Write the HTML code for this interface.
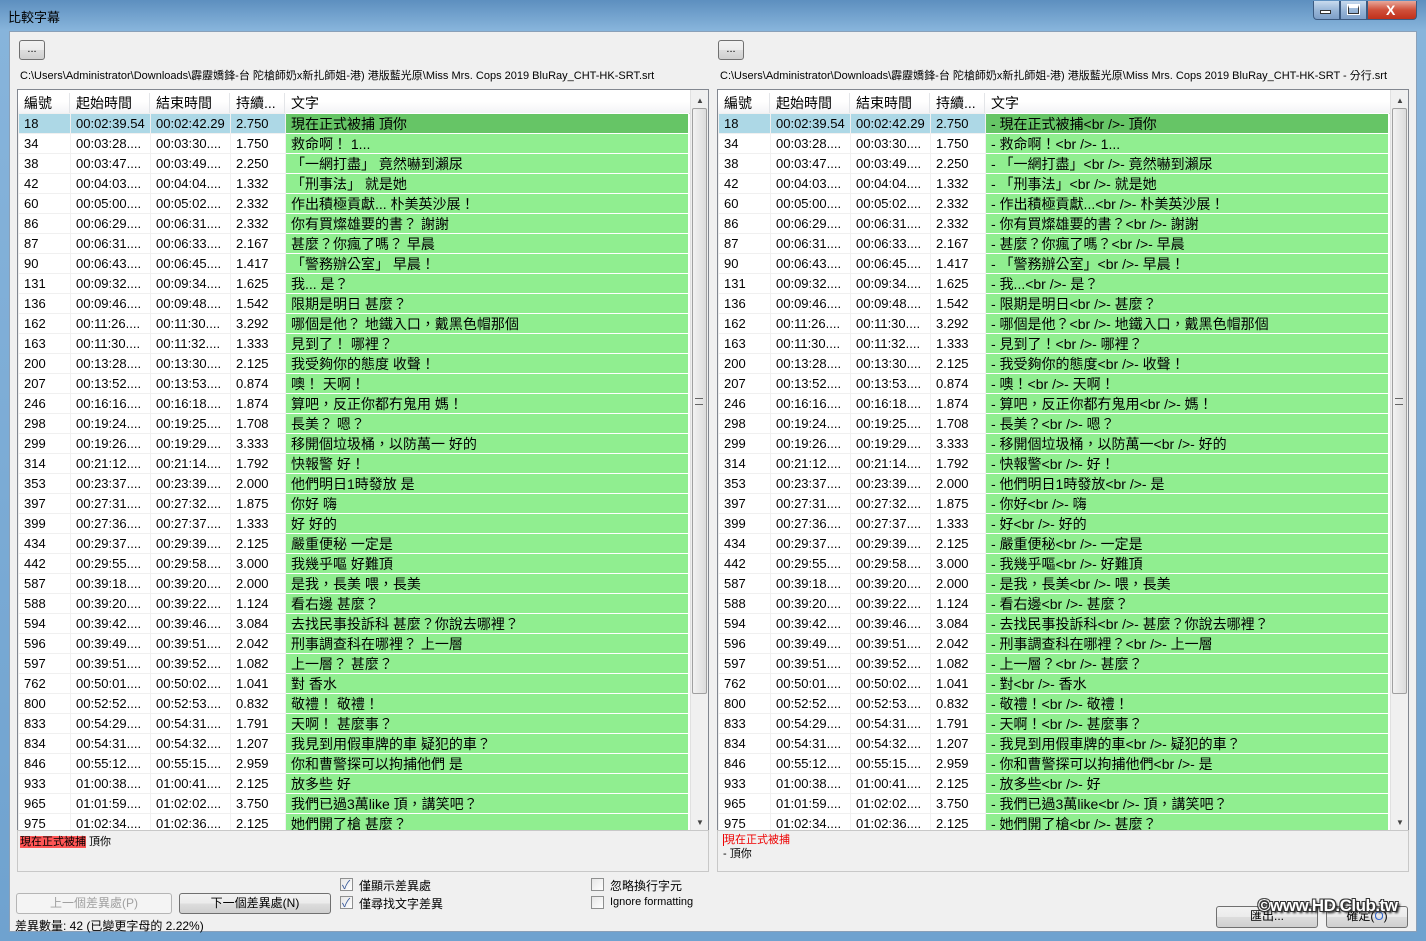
<!DOCTYPE html>
<html><head><meta charset="utf-8"><style>
*{margin:0;padding:0;box-sizing:border-box}
body{width:1426px;height:941px;overflow:hidden;position:relative;background:linear-gradient(#5d8fbf,#87b4db 30px,#6fa2cf);font-family:"Liberation Sans","Noto Sans CJK TC",sans-serif;font-size:12px;color:#000}
.abs{position:absolute}
#client{left:9px;top:31px;width:1408px;height:901px;background:#f0f0f0;border:1px solid #8aa0b8}
.title{left:8px;top:7px;font-size:13px;color:#000}
.wbtn{top:1px;height:19px;border:1px solid #3b5a80;border-top:none;background:linear-gradient(#c9dbee,#9ab7d8 50%,#7d9fc8);}
.dots{width:26px;height:20px;border:1px solid #707070;border-radius:3px;background:linear-gradient(#f2f2f2,#ebebeb 50%,#dddddd 51%,#cfcfcf);font-size:11px;text-align:center;line-height:16px}
.path{font-size:11px;white-space:nowrap}
.list{width:692px;height:742px;background:#fff;border:1px solid #828790;overflow:hidden}
.hdr{position:absolute;left:0;top:0;width:672px;height:24px;background:linear-gradient(#fff,#fff 50%,#f3f4f6);border-bottom:1px solid #d5d5d5}
.hdr span{position:absolute;top:3px;font-size:14px;border-right:1px solid #e3e5e8;height:21px;padding-left:6px}
table{position:absolute;left:0;top:23px;border-collapse:collapse;table-layout:fixed;width:670px}
td{height:20px;border:1px solid #f0f0f0;white-space:nowrap;overflow:hidden;font-size:13px;padding-left:5px;line-height:18px}
td:nth-child(5){background:#90ee90;font-size:14px;border-color:#fff}
tr.sel td{background:#add8e6}
tr.sel td:nth-child(5){background:#66c566}
.sb{position:absolute;right:0;top:0;width:18px;height:740px;background:#f0f0f0;border-left:1px solid #e0e0e0}
.thumb{position:absolute;left:1px;top:18px;width:15px;height:586px;border:1px solid #a0a0a0;border-radius:2px;background:linear-gradient(90deg,#f2f2f2,#dcdcdc)}
.diff{width:692px;height:42px;border:1px solid #c8c8c8;background:#f0f0f0;font-size:11px}
.btn{height:21px;border:1px solid #707070;border-radius:3px;background:linear-gradient(#f2f2f2,#ebebeb 50%,#dddddd 51%,#cfcfcf);text-align:center;line-height:19px;font-size:12px}
.cb{width:13px;height:13px;border:1px solid #8e8f8f;background:linear-gradient(135deg,#e6e6e6,#fff)}
.lbl{font-size:12px;white-space:nowrap}
</style></head><body>
<div class="abs title">比較字幕</div>
<div class="abs wbtn" style="left:1313px;width:27px;border-left:1px solid #3b5a80;border-radius:0 0 0 4px"></div>
<div class="abs wbtn" style="left:1340px;width:27px"></div>
<div class="abs wbtn" style="left:1367px;width:50px;background:linear-gradient(#e8a89a,#d0503a 50%,#c0301b);border-radius:0 0 4px 0"></div>
<div class="abs" style="left:1320px;top:10px;width:11px;height:4px;background:#fff;border:1px solid #333"></div>
<div class="abs" style="left:1348px;top:5px;width:11px;height:9px;border:1px solid #333;border-top:3px solid #fff;outline:1px solid #fff"></div>
<div class="abs" style="left:1386px;top:2px;color:#fff;font-weight:bold;font-size:14px">X</div>
<div class="abs" id="client"></div>

<div class="abs dots" style="left:19px;top:40px">...</div>
<div class="abs dots" style="left:718px;top:40px">...</div>
<div class="abs path" style="left:20px;top:67px">C:\Users\Administrator\Downloads\霹靂嬌鋒-台 陀槍師奶x新扎師姐-港) 港版藍光原\Miss Mrs. Cops 2019 BluRay_CHT-HK-SRT.srt</div>
<div class="abs path" style="left:720px;top:67px">C:\Users\Administrator\Downloads\霹靂嬌鋒-台 陀槍師奶x新扎師姐-港) 港版藍光原\Miss Mrs. Cops 2019 BluRay_CHT-HK-SRT - 分行.srt</div>

<div class="abs list" style="left:17px;top:89px">
<div class="hdr"><span style="left:0;width:52px">編號</span><span style="left:52px;width:80px">起始時間</span><span style="left:132px;width:80px">結束時間</span><span style="left:212px;width:55px">持續...</span><span style="left:267px;width:405px;border:none">文字</span></div>
<table><colgroup><col style="width:52px"><col style="width:80px"><col style="width:80px"><col style="width:55px"><col style="width:403px"></colgroup>
<tr class="sel"><td>18</td><td>00:02:39.54</td><td>00:02:42.29</td><td>2.750</td><td>現在正式被捕 頂你</td></tr>
<tr><td>34</td><td>00:03:28....</td><td>00:03:30....</td><td>1.750</td><td>救命啊！ 1...</td></tr>
<tr><td>38</td><td>00:03:47....</td><td>00:03:49....</td><td>2.250</td><td>「一網打盡」 竟然嚇到瀨尿</td></tr>
<tr><td>42</td><td>00:04:03....</td><td>00:04:04....</td><td>1.332</td><td>「刑事法」 就是她</td></tr>
<tr><td>60</td><td>00:05:00....</td><td>00:05:02....</td><td>2.332</td><td>作出積極貢獻... 朴美英沙展！</td></tr>
<tr><td>86</td><td>00:06:29....</td><td>00:06:31....</td><td>2.332</td><td>你有買燦雄要的書？ 謝謝</td></tr>
<tr><td>87</td><td>00:06:31....</td><td>00:06:33....</td><td>2.167</td><td>甚麼？你瘋了嗎？ 早晨</td></tr>
<tr><td>90</td><td>00:06:43....</td><td>00:06:45....</td><td>1.417</td><td>「警務辦公室」 早晨！</td></tr>
<tr><td>131</td><td>00:09:32....</td><td>00:09:34....</td><td>1.625</td><td>我... 是？</td></tr>
<tr><td>136</td><td>00:09:46....</td><td>00:09:48....</td><td>1.542</td><td>限期是明日 甚麼？</td></tr>
<tr><td>162</td><td>00:11:26....</td><td>00:11:30....</td><td>3.292</td><td>哪個是他？ 地鐵入口，戴黑色帽那個</td></tr>
<tr><td>163</td><td>00:11:30....</td><td>00:11:32....</td><td>1.333</td><td>見到了！ 哪裡？</td></tr>
<tr><td>200</td><td>00:13:28....</td><td>00:13:30....</td><td>2.125</td><td>我受夠你的態度 收聲！</td></tr>
<tr><td>207</td><td>00:13:52....</td><td>00:13:53....</td><td>0.874</td><td>噢！ 天啊！</td></tr>
<tr><td>246</td><td>00:16:16....</td><td>00:16:18....</td><td>1.874</td><td>算吧，反正你都冇鬼用 媽！</td></tr>
<tr><td>298</td><td>00:19:24....</td><td>00:19:25....</td><td>1.708</td><td>長美？ 嗯？</td></tr>
<tr><td>299</td><td>00:19:26....</td><td>00:19:29....</td><td>3.333</td><td>移開個垃圾桶，以防萬一 好的</td></tr>
<tr><td>314</td><td>00:21:12....</td><td>00:21:14....</td><td>1.792</td><td>快報警 好！</td></tr>
<tr><td>353</td><td>00:23:37....</td><td>00:23:39....</td><td>2.000</td><td>他們明日1時發放 是</td></tr>
<tr><td>397</td><td>00:27:31....</td><td>00:27:32....</td><td>1.875</td><td>你好 嗨</td></tr>
<tr><td>399</td><td>00:27:36....</td><td>00:27:37....</td><td>1.333</td><td>好 好的</td></tr>
<tr><td>434</td><td>00:29:37....</td><td>00:29:39....</td><td>2.125</td><td>嚴重便秘 一定是</td></tr>
<tr><td>442</td><td>00:29:55....</td><td>00:29:58....</td><td>3.000</td><td>我幾乎嘔 好難頂</td></tr>
<tr><td>587</td><td>00:39:18....</td><td>00:39:20....</td><td>2.000</td><td>是我，長美 喂，長美</td></tr>
<tr><td>588</td><td>00:39:20....</td><td>00:39:22....</td><td>1.124</td><td>看右邊 甚麼？</td></tr>
<tr><td>594</td><td>00:39:42....</td><td>00:39:46....</td><td>3.084</td><td>去找民事投訴科 甚麼？你說去哪裡？</td></tr>
<tr><td>596</td><td>00:39:49....</td><td>00:39:51....</td><td>2.042</td><td>刑事調查科在哪裡？ 上一層</td></tr>
<tr><td>597</td><td>00:39:51....</td><td>00:39:52....</td><td>1.082</td><td>上一層？ 甚麼？</td></tr>
<tr><td>762</td><td>00:50:01....</td><td>00:50:02....</td><td>1.041</td><td>對 香水</td></tr>
<tr><td>800</td><td>00:52:52....</td><td>00:52:53....</td><td>0.832</td><td>敬禮！ 敬禮！</td></tr>
<tr><td>833</td><td>00:54:29....</td><td>00:54:31....</td><td>1.791</td><td>天啊！ 甚麼事？</td></tr>
<tr><td>834</td><td>00:54:31....</td><td>00:54:32....</td><td>1.207</td><td>我見到用假車牌的車 疑犯的車？</td></tr>
<tr><td>846</td><td>00:55:12....</td><td>00:55:15....</td><td>2.959</td><td>你和曹警探可以拘捕他們 是</td></tr>
<tr><td>933</td><td>01:00:38....</td><td>01:00:41....</td><td>2.125</td><td>放多些 好</td></tr>
<tr><td>965</td><td>01:01:59....</td><td>01:02:02....</td><td>3.750</td><td>我們已過3萬like 頂，講笑吧？</td></tr>
<tr><td>975</td><td>01:02:34....</td><td>01:02:36....</td><td>2.125</td><td>她們開了槍 甚麼？</td></tr>
</table>
<div class="sb"><div class="abs" style="left:5px;top:6px;font-size:8px;color:#444">▲</div><div class="thumb"></div><div class="abs" style="left:4px;top:308px;width:8px;height:7px;border-top:1px solid #666;border-bottom:1px solid #666"></div><div class="abs" style="left:5px;top:728px;font-size:8px;color:#444">▼</div></div>
</div>

<div class="abs list" style="left:717px;top:89px">
<div class="hdr"><span style="left:0;width:52px">編號</span><span style="left:52px;width:80px">起始時間</span><span style="left:132px;width:80px">結束時間</span><span style="left:212px;width:55px">持續...</span><span style="left:267px;width:405px;border:none">文字</span></div>
<table><colgroup><col style="width:52px"><col style="width:80px"><col style="width:80px"><col style="width:55px"><col style="width:403px"></colgroup>
<tr class="sel"><td>18</td><td>00:02:39.54</td><td>00:02:42.29</td><td>2.750</td><td>- 現在正式被捕&lt;br /&gt;- 頂你</td></tr>
<tr><td>34</td><td>00:03:28....</td><td>00:03:30....</td><td>1.750</td><td>- 救命啊！&lt;br /&gt;- 1...</td></tr>
<tr><td>38</td><td>00:03:47....</td><td>00:03:49....</td><td>2.250</td><td>- 「一網打盡」&lt;br /&gt;- 竟然嚇到瀨尿</td></tr>
<tr><td>42</td><td>00:04:03....</td><td>00:04:04....</td><td>1.332</td><td>- 「刑事法」&lt;br /&gt;- 就是她</td></tr>
<tr><td>60</td><td>00:05:00....</td><td>00:05:02....</td><td>2.332</td><td>- 作出積極貢獻...&lt;br /&gt;- 朴美英沙展！</td></tr>
<tr><td>86</td><td>00:06:29....</td><td>00:06:31....</td><td>2.332</td><td>- 你有買燦雄要的書？&lt;br /&gt;- 謝謝</td></tr>
<tr><td>87</td><td>00:06:31....</td><td>00:06:33....</td><td>2.167</td><td>- 甚麼？你瘋了嗎？&lt;br /&gt;- 早晨</td></tr>
<tr><td>90</td><td>00:06:43....</td><td>00:06:45....</td><td>1.417</td><td>- 「警務辦公室」&lt;br /&gt;- 早晨！</td></tr>
<tr><td>131</td><td>00:09:32....</td><td>00:09:34....</td><td>1.625</td><td>- 我...&lt;br /&gt;- 是？</td></tr>
<tr><td>136</td><td>00:09:46....</td><td>00:09:48....</td><td>1.542</td><td>- 限期是明日&lt;br /&gt;- 甚麼？</td></tr>
<tr><td>162</td><td>00:11:26....</td><td>00:11:30....</td><td>3.292</td><td>- 哪個是他？&lt;br /&gt;- 地鐵入口，戴黑色帽那個</td></tr>
<tr><td>163</td><td>00:11:30....</td><td>00:11:32....</td><td>1.333</td><td>- 見到了！&lt;br /&gt;- 哪裡？</td></tr>
<tr><td>200</td><td>00:13:28....</td><td>00:13:30....</td><td>2.125</td><td>- 我受夠你的態度&lt;br /&gt;- 收聲！</td></tr>
<tr><td>207</td><td>00:13:52....</td><td>00:13:53....</td><td>0.874</td><td>- 噢！&lt;br /&gt;- 天啊！</td></tr>
<tr><td>246</td><td>00:16:16....</td><td>00:16:18....</td><td>1.874</td><td>- 算吧，反正你都冇鬼用&lt;br /&gt;- 媽！</td></tr>
<tr><td>298</td><td>00:19:24....</td><td>00:19:25....</td><td>1.708</td><td>- 長美？&lt;br /&gt;- 嗯？</td></tr>
<tr><td>299</td><td>00:19:26....</td><td>00:19:29....</td><td>3.333</td><td>- 移開個垃圾桶，以防萬一&lt;br /&gt;- 好的</td></tr>
<tr><td>314</td><td>00:21:12....</td><td>00:21:14....</td><td>1.792</td><td>- 快報警&lt;br /&gt;- 好！</td></tr>
<tr><td>353</td><td>00:23:37....</td><td>00:23:39....</td><td>2.000</td><td>- 他們明日1時發放&lt;br /&gt;- 是</td></tr>
<tr><td>397</td><td>00:27:31....</td><td>00:27:32....</td><td>1.875</td><td>- 你好&lt;br /&gt;- 嗨</td></tr>
<tr><td>399</td><td>00:27:36....</td><td>00:27:37....</td><td>1.333</td><td>- 好&lt;br /&gt;- 好的</td></tr>
<tr><td>434</td><td>00:29:37....</td><td>00:29:39....</td><td>2.125</td><td>- 嚴重便秘&lt;br /&gt;- 一定是</td></tr>
<tr><td>442</td><td>00:29:55....</td><td>00:29:58....</td><td>3.000</td><td>- 我幾乎嘔&lt;br /&gt;- 好難頂</td></tr>
<tr><td>587</td><td>00:39:18....</td><td>00:39:20....</td><td>2.000</td><td>- 是我，長美&lt;br /&gt;- 喂，長美</td></tr>
<tr><td>588</td><td>00:39:20....</td><td>00:39:22....</td><td>1.124</td><td>- 看右邊&lt;br /&gt;- 甚麼？</td></tr>
<tr><td>594</td><td>00:39:42....</td><td>00:39:46....</td><td>3.084</td><td>- 去找民事投訴科&lt;br /&gt;- 甚麼？你說去哪裡？</td></tr>
<tr><td>596</td><td>00:39:49....</td><td>00:39:51....</td><td>2.042</td><td>- 刑事調查科在哪裡？&lt;br /&gt;- 上一層</td></tr>
<tr><td>597</td><td>00:39:51....</td><td>00:39:52....</td><td>1.082</td><td>- 上一層？&lt;br /&gt;- 甚麼？</td></tr>
<tr><td>762</td><td>00:50:01....</td><td>00:50:02....</td><td>1.041</td><td>- 對&lt;br /&gt;- 香水</td></tr>
<tr><td>800</td><td>00:52:52....</td><td>00:52:53....</td><td>0.832</td><td>- 敬禮！&lt;br /&gt;- 敬禮！</td></tr>
<tr><td>833</td><td>00:54:29....</td><td>00:54:31....</td><td>1.791</td><td>- 天啊！&lt;br /&gt;- 甚麼事？</td></tr>
<tr><td>834</td><td>00:54:31....</td><td>00:54:32....</td><td>1.207</td><td>- 我見到用假車牌的車&lt;br /&gt;- 疑犯的車？</td></tr>
<tr><td>846</td><td>00:55:12....</td><td>00:55:15....</td><td>2.959</td><td>- 你和曹警探可以拘捕他們&lt;br /&gt;- 是</td></tr>
<tr><td>933</td><td>01:00:38....</td><td>01:00:41....</td><td>2.125</td><td>- 放多些&lt;br /&gt;- 好</td></tr>
<tr><td>965</td><td>01:01:59....</td><td>01:02:02....</td><td>3.750</td><td>- 我們已過3萬like&lt;br /&gt;- 頂，講笑吧？</td></tr>
<tr><td>975</td><td>01:02:34....</td><td>01:02:36....</td><td>2.125</td><td>- 她們開了槍&lt;br /&gt;- 甚麼？</td></tr>
</table>
<div class="sb"><div class="abs" style="left:5px;top:6px;font-size:8px;color:#444">▲</div><div class="thumb"></div><div class="abs" style="left:4px;top:308px;width:8px;height:7px;border-top:1px solid #666;border-bottom:1px solid #666"></div><div class="abs" style="left:5px;top:728px;font-size:8px;color:#444">▼</div></div>
</div>

<div class="abs diff" style="left:17px;top:830px"><div style="margin:2px 0 0 2px"><span style="background:#f55;">現在正式被捕</span> 頂你</div></div>
<div class="abs diff" style="left:717px;top:830px"><div style="margin:2px 0 0 5px;line-height:14px"><span style="color:#e00;border-left:1px solid #e00">現在正式被捕</span><br>- 頂你</div></div>

<div class="abs btn" style="left:16px;top:893px;width:156px;color:#a0a0a0;border-color:#b5b5b5;background:#f4f4f4">上一個差異處(P)</div>
<div class="abs btn" style="left:179px;top:893px;width:152px">下一個差異處(N)</div>
<div class="abs cb" style="left:340px;top:878px"></div><div class="abs" style="left:342px;top:876px;color:#3a5a9a;font-size:12px">✓</div>
<div class="abs lbl" style="left:359px;top:877px">僅顯示差異處</div>
<div class="abs cb" style="left:340px;top:896px"></div><div class="abs" style="left:342px;top:894px;color:#3a5a9a;font-size:12px">✓</div>
<div class="abs lbl" style="left:359px;top:895px">僅尋找文字差異</div>
<div class="abs cb" style="left:591px;top:878px"></div>
<div class="abs lbl" style="left:610px;top:877px">忽略換行字元</div>
<div class="abs cb" style="left:591px;top:896px"></div>
<div class="abs lbl" style="left:610px;top:896px;font-size:11px">Ignore formatting</div>
<div class="abs lbl" style="left:15px;top:917px">差異數量: 42 (已變更字母的 2.22%)</div>

<div class="abs btn" style="left:1216px;top:906px;width:102px;height:22px">匯出...</div>
<div class="abs btn" style="left:1326px;top:906px;width:82px;height:22px">確定(<span style="color:#36c">O</span>)</div>
<div class="abs" style="left:1258px;top:896px;font-size:17px;font-weight:bold;color:#fff;letter-spacing:-0.5px;text-shadow:1px 1px 0 #333,-1px -1px 0 #333,1px -1px 0 #333,-1px 1px 0 #333,2px 2px 2px #000">©www.HD.Club.tw</div>
</body></html>
